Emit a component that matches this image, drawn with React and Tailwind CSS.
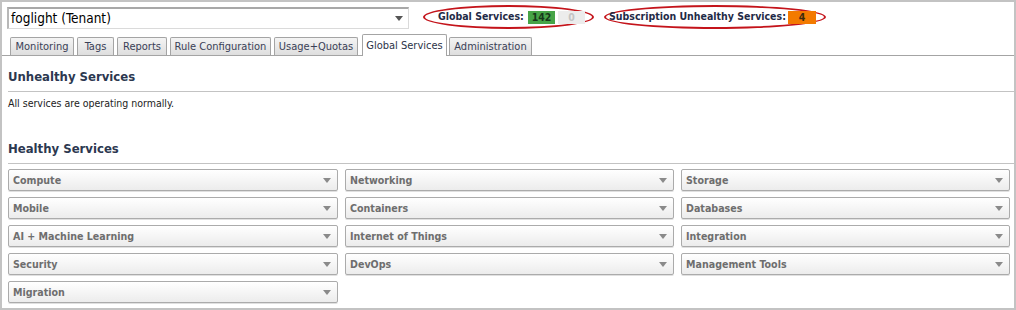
import React from "react";

const tabs = [
  { label: "Monitoring", w: "w-[64px]" },
  { label: "Tags", w: "w-[37px]" },
  { label: "Reports", w: "w-[50px]" },
  { label: "Rule Configuration", w: "w-[101px]" },
  { label: "Usage+Quotas", w: "w-[84px]" },
  { label: "Global Services", w: "w-[85px]", active: true },
  { label: "Administration", w: "w-[83px]" },
];

const services = [
  "Compute", "Networking", "Storage",
  "Mobile", "Containers", "Databases",
  "AI + Machine Learning", "Internet of Things", "Integration",
  "Security", "DevOps", "Management Tools",
  "Migration",
];

const Arrow = ({ color = "#7a7a7a" }) => (
  <svg width="8" height="5" viewBox="0 0 8 5">
    <path d="M0 0 H8 L4 5 Z" fill={color} />
  </svg>
);

const ServiceBox = ({ name }) => (
  <div className="h-[22px] flex items-center justify-between pl-[4px] pr-[6px] border border-[#ababab] rounded-[2px] bg-gradient-to-b from-white to-[#ececec] shadow-[0_1px_0_#e0e0e0]">
    <span className="text-[10.6px] font-bold text-[#6e6e6e] leading-none">{name}</span>
    <Arrow color="#8a8a8a" />
  </div>
);

export default function App() {
  return (
    <div
      className="w-[1016px] h-[310px] border-2 border-[#c3c3c3] bg-white text-[#222]"
      style={{ fontFamily: "'DejaVu Sans Condensed', 'Liberation Sans', sans-serif" }}
    >
      {/* top bar */}
      <div className="flex items-end pl-[5px] pt-[3px]">
        <div className="w-[402px] h-[22px] flex items-center justify-between pl-[2px] pr-[5px] border-t-2 border-l-2 border-r border-b border-t-[#a8a8a8] border-l-[#b8b8b8] border-r-[#dadada] border-b-[#dadada] bg-white">
          <span className="text-[13.5px] text-black leading-none">foglight (Tenant)</span>
          <Arrow color="#555" />
        </div>

        <div className="ml-[14px] w-[171px] h-[24px] rounded-[50%] border-2 border-[#c4141b] flex items-center pl-[13px]">
          <span className="text-[10.5px] font-bold text-[#1f2b47] whitespace-nowrap">Global Services:</span>
          <span className="ml-auto w-[27px] h-[13px] bg-[#47a447] text-[10.5px] font-bold text-[#17381b] flex items-center justify-center leading-none">142</span>
          <span className="ml-[3px] mr-[7px] w-[27px] h-[13px] bg-[#ececec] text-[10.5px] font-bold text-[#c4c4c4] flex items-center justify-center leading-none">0</span>
        </div>

        <div className="ml-[10px] w-[222px] h-[24px] rounded-[50%] border-2 border-[#c4141b] flex items-center pl-[3px]">
          <span className="text-[10.5px] font-bold text-[#1f2b47] whitespace-nowrap">Subscription Unhealthy Services:</span>
          <span className="ml-auto mr-[8px] w-[28px] h-[13px] bg-[#f37a00] text-[10.5px] font-bold text-[#3a2a10] flex items-center justify-center leading-none">4</span>
        </div>
      </div>

      {/* tabs */}
      <div className="mt-[5px] h-[22px] flex items-end pl-[8px] border-b border-[#a4a4a4]">
        {tabs.map((t) =>
          t.active ? (
            <div
              key={t.label}
              className={`${t.w} h-[22px] ml-[1px] mr-[2px] -mb-px bg-white border border-b-0 border-[#a4a4a4] rounded-t-[2px] flex items-center justify-center text-[11px] text-[#2b3348] leading-none`}
            >
              {t.label}
            </div>
          ) : (
            <div
              key={t.label}
              className={`${t.w} h-[18px] mr-[3px] bg-gradient-to-b from-[#f4f4f4] to-[#dedede] border border-b-0 border-[#a4a4a4] rounded-t-[2px] flex items-center justify-center text-[11px] text-[#3a4157] leading-none`}
            >
              {t.label}
            </div>
          )
        )}
      </div>

      {/* content */}
      <div className="pl-[6px]">
        <div className="mt-[13px] pb-[6px] border-b border-[#c3c3c3] text-[13px] leading-[16px] font-bold text-[#2c3850]">
          Unhealthy Services
        </div>
        <div className="mt-[4px] text-[10.5px] leading-[14px] text-[#222]">All services are operating normally.</div>

        <div className="mt-[31px] pb-[6px] border-b border-[#c3c3c3] text-[13px] leading-[16px] font-bold text-[#2c3850]">
          Healthy Services
        </div>

        <div className="mt-[5px] pr-[4px] grid grid-cols-[330px_329px_329px] gap-x-[7px] gap-y-[6px]">
          {services.map((s) => (
            <ServiceBox key={s} name={s} />
          ))}
        </div>
      </div>
    </div>
  );
}
